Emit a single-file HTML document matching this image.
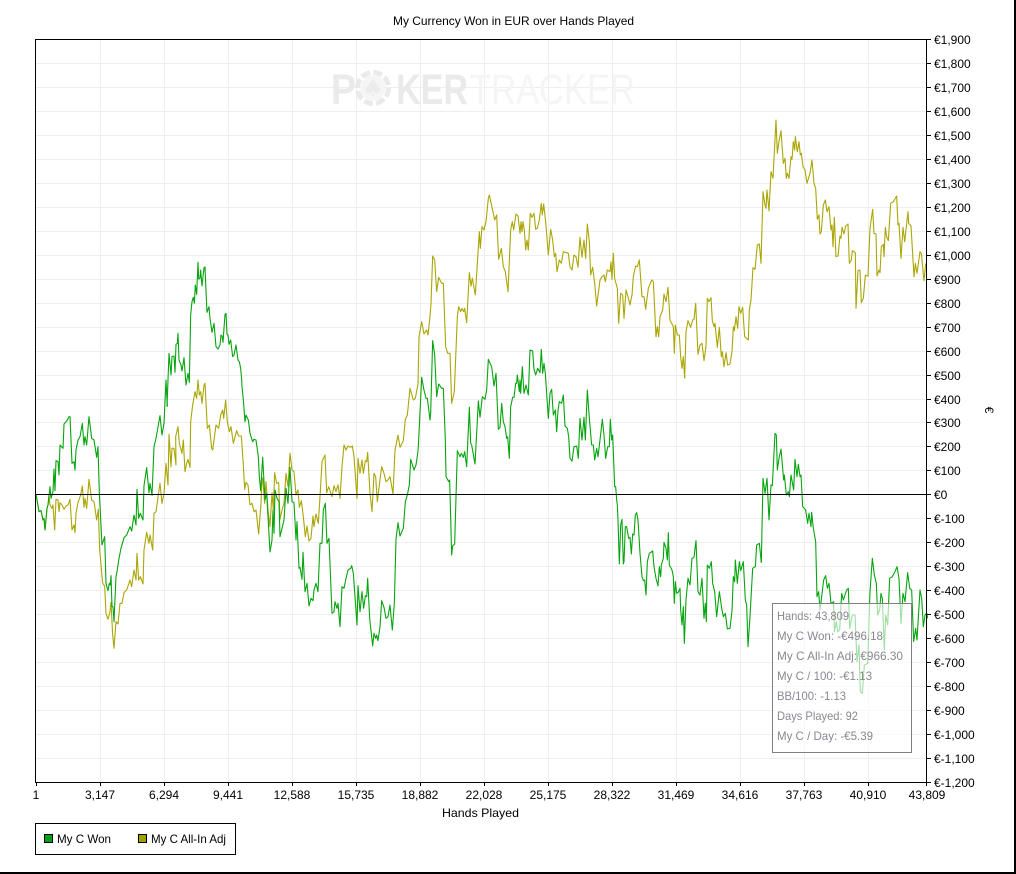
<!DOCTYPE html>
<html><head><meta charset="utf-8"><title>My Currency Won in EUR over Hands Played</title>
<style>
html,body{margin:0;padding:0;background:#fff;width:1016px;height:874px;overflow:hidden}
svg{display:block;position:absolute;left:0;top:0}
text{font-family:"Liberation Sans",Arial,sans-serif;font-size:12px;fill:#000}
.g polyline,.o polyline{fill:none;stroke-width:1.1;vector-effect:non-scaling-stroke;stroke-linejoin:round}
.g polyline{stroke:#06a50e}
.o polyline{stroke:#aba606}
.t text{fill:#8b8792}
</style></head><body>
<svg width="1016" height="874" viewBox="0 0 1016 874" xmlns="http://www.w3.org/2000/svg">
<rect width="1016" height="874" fill="#fff"/>
<rect x="1014" y="0" width="2" height="874" fill="#000"/>
<rect x="0" y="872" width="1016" height="2" fill="#000"/>
<text x="513.5" y="25" text-anchor="middle" textLength="241" lengthAdjust="spacingAndGlyphs">My Currency Won in EUR over Hands Played</text>

<path shape-rendering="crispEdges" fill="none" stroke="#eeeeee" d="M36 63.5H926M36 87.5H926M36 111.5H926M36 135.5H926M36 159.5H926M36 183.5H926M36 207.5H926M36 231.5H926M36 255.5H926M36 279.5H926M36 303.5H926M36 327.5H926M36 351.5H926M36 375.5H926M36 399.5H926M36 422.5H926M36 446.5H926M36 470.5H926M36 518.5H926M36 542.5H926M36 566.5H926M36 590.5H926M36 614.5H926M36 638.5H926M36 662.5H926M36 686.5H926M36 710.5H926M36 734.5H926M36 758.5H926M100.5 40V782M164.5 40V782M228.5 40V782M292.5 40V782M356.5 40V782M420.5 40V782M484.5 40V782M548.5 40V782M612.5 40V782M676.5 40V782M740.5 40V782M804.5 40V782M868.5 40V782"/>

<g>
<text x="331" y="104" textLength="25" lengthAdjust="spacingAndGlyphs" style="font-size:43px;font-weight:bold;fill:#e8e8e8;fill-opacity:.9">P</text>
<circle cx="373" cy="88" r="15.5" fill="none" stroke="#e8e8e8" stroke-width="5" stroke-dasharray="9 3.2" opacity=".9"/>
<circle cx="373" cy="88" r="12.5" fill="#f4f4f4" opacity=".9"/>
<text x="373" y="96" text-anchor="middle" style="font-size:24px;fill:#ececec;font-family:'DejaVu Sans',sans-serif">♠</text>
<text x="396" y="104" textLength="72" lengthAdjust="spacingAndGlyphs" style="font-size:43px;font-weight:bold;fill:#e8e8e8;fill-opacity:.9">KER</text>
<text x="470" y="104" textLength="165" lengthAdjust="spacingAndGlyphs" style="font-size:43px;fill:#f4f4f4;fill-opacity:.9">TRACKER</text>
</g>

<g class="o">
<polyline transform="translate(30,370) scale(.33333)" points="18,373 21,390 27,425 33,422 39,450 42,445 45,480 51,415 54,405 57,375 60,405 66,415 69,405 74,480 78,388 84,390 87,425 90,398 96,405 102,418 108,408 114,405 120,388 126,480 132,465 135,488 138,430 144,398 152,375 157,348 162,412 165,385 170,415 177,328 185,390 192,395 200,450 205,418 209,540 218,640 224,648 228,730 234,748 240,725 243,697 248,795 252,835 258,755 264,762 270,700 276,700 282,668 290,660 300,630 305,650 312,600 318,630 321,550 326,630 331,620 339,642 342,540 350,487 357,520 360,495 368,540 372,430 378,425 390,340 396,400 402,370 408,280 414,345 417,193 423,290 426,235 432,235 438,285 437,200 444,170 448,220 456,250 460,210 465,305 470,280 474,268 480,292 482,155 488,105 495,65 500,85 504,30 508,75 512,65 516,100 522,45 525,40 532,175 538,165 545,235 548,240 558,165 566,175 572,135 578,120 581,145 587,90 592,155 598,185 603,170 610,220 620,182 626,198 634,198 640,285 644,358 648,337 654,345 660,405 666,400 672,425 678,420 686,492 693,400 696,325"/>
<polyline transform="translate(260,370) scale(.33333)" points="8,322 14,400 18,335 24,420 30,470 36,368 40,420 44,308 50,340 56,338 60,448 66,420 72,400 78,310 84,350 90,250 96,300 102,305 108,375 114,360 118,412 124,392 130,440 136,500 141,468 147,513 153,505 159,438 162,470 168,432 175,460 180,380 186,275 195,255 200,368 206,350 216,380 222,347 228,365 234,345 240,385 246,290 252,225 258,240 264,228 272,232 277,228 282,260 291,385 294,265 300,310 306,270 310,310 316,272 320,275 323,247 330,370 336,425 342,310 347,320 352,395 358,345 365,290 372,310 378,335 384,330 390,320 399,372 405,240 414,195 420,232 430,212 436,148 442,135 450,55 460,90 466,85 474,42"/>
<polyline transform="translate(400,180) scale(.33333)" points="54,612 57,470 65,425 72,462 80,450 84,465 90,410 93,370 98,228 104,240 110,335 116,292 125,310 130,310 137,500 143,520 150,520 155,670 163,635 172,410 176,380 182,395 186,385 191,395 194,385 200,428 208,278 213,318 217,295 226,345 232,250 238,155 241,205 246,140 252,150 258,125 265,55 268,45 280,100 284,120 290,105 296,238 304,205 310,260 316,275 324,335 332,150 337,125 341,150 348,102 354,108 360,160 363,125 366,155 369,125 373,150 377,210 381,180 385,210 391,100 396,112 402,100 407,148 412,145 418,120 424,70 427,105 431,72 437,125 445,225 452,148 458,180 463,230 467,220 471,275 478,240 484,250 490,215 505,220 510,260 516,270 522,225 528,230 534,262 540,172 546,232 552,180 557,235 562,132 568,185 572,285 578,262 584,310 590,378 600,300 606,290 612,285 616,305 622,270 630,275 633,245 636,298 640,220 644,295 652,325 656,430 662,340 668,345 672,415 678,330 684,350 690,375 696,345 700,290 707,258 712,260 718,240 726,350 732,350 737,388 745,325 755,300 760,305 768,470 772,440 776,470 780,410 788,390 792,342 798,365 804,322 810,420 820,440 823,520 826,435 832,465 838,465 842,530 846,565 850,530 854,595"/>
<polyline transform="translate(680,110) scale(.33333)" points="14,805 18,665 24,632 32,652 38,630 42,628 47,580 54,733 60,705 66,700 72,752 78,708 82,565 87,575 93,563 97,632 102,650 105,640 112,712 118,652 124,740 127,725 132,770 138,728 143,765 150,762 156,725 160,650 163,662 168,620 173,655 177,590 182,610 188,592 194,680 200,685 205,690 208,600 213,570 219,473 225,478 232,405 238,402 243,460 249,245 255,285 258,295 261,240 267,303 273,185 279,205 288,30 292,130 296,100 303,62 310,160 315,145 319,205 322,190 327,205 333,140 336,148 340,95 344,120 346,80 352,125 357,95 361,135 364,130 369,170 375,180 381,220 390,190 396,150 402,220 407,235 412,328 417,315 420,372 424,365 430,285 436,270 441,305 447,290 453,360 456,345 459,410 463,322 468,440 474,438 480,378 483,385 486,352 492,372 497,348 504,342 508,460 514,450 517,422 526,428 528,595 534,482 540,480 544,578 550,565 556,496 564,498 570,355 578,298 582,370 588,372 591,498 597,480 600,488 604,410 610,403 612,440 616,352 620,380 625,392 632,280 640,275 650,258 654,345 657,340 663,445 669,352 674,395 684,305 686,340 693,348 702,500 706,460 711,490 720,425 724,430 732,512 737,462 740,460"/>
</g>

<g class="g">
<polyline transform="translate(30,370) scale(.33333)" points="18,373 21,390 27,425 33,422 39,450 42,445 45,480 51,415 54,405 60,350 63,385 69,365 72,297 75,362 78,272 84,275 87,315 90,225 99,235 102,162 111,152 117,140 120,140 126,280 132,275 135,300 138,240 144,210 150,200 157,160 162,225 165,200 170,225 177,140 185,205 192,210 200,262 204,230 208,370 216,525 224,500 228,640 234,662 238,640 241,645 243,617 246,710 249,710 252,755 258,620 261,605 267,565 273,535 282,503 290,495 300,470 305,483 312,435 318,465 321,358 326,445 331,430 339,450 342,347 350,293 357,368 360,340 366,376 372,230 378,205 390,137 396,195 402,160 408,30 412,110"/>
<polyline transform="translate(160,255) scale(.33333)" points="21,455 27,295 33,360 36,305 42,303 45,352 48,268 52,265 54,235 57,315 63,330 66,348 72,308 78,390 84,355 88,382 92,180 96,140 100,127 103,145 106,90 110,118 114,22 116,72 120,70 122,45 126,93 132,38 135,36 139,130 141,172 147,155 150,190 156,232 162,205 168,275 174,282 180,270 183,240 186,243 189,262 195,178 198,175 201,238 204,240 207,268 212,255 218,305 222,300 228,270 234,315 238,320 242,340 246,385"/>
<polyline transform="translate(30,370) scale(.33333)" points="635,40 640,90 645,155 648,135 655,150 660,190 668,215 672,208 678,210 685,260 688,320 692,362 698,262 705,390 710,370 720,545"/>
<polyline transform="translate(260,370) scale(.33333)" points="30,547 36,510 39,420 42,490 45,360 51,385 57,395 60,500 66,475 72,450 78,355 84,400 90,292 96,395 102,398 108,510 111,455 117,595 120,592 126,628 129,547 135,665 141,640 147,708 153,685 159,692 162,660 168,640 174,665 180,520 186,520 190,420 196,400 201,520 207,505 216,730 222,725 225,695 231,715 234,700 240,770 246,650 252,655 258,625 264,600 272,595 275,587 280,610 285,680 291,765 294,647 300,725 306,665 311,715 316,677 320,680 323,625 329,745 338,828 342,790 347,805 350,795 354,812 360,770 365,692 372,712 378,745 384,740 390,705 397,780 403,700 408,508 414,458 420,498 430,475 436,395 442,375 448,345 452,268 462,300 468,285 474,244"/>
<polyline transform="translate(400,180) scale(.33333)" points="54,814 56,780 65,592 72,630 78,655 82,655 90,720 92,700 98,482 104,525 110,650 116,612 125,625 130,625 136,780"/>
<polyline transform="translate(260,370) scale(.33333)" points="556,210 558,320 566,335 569,330 575,555 578,528 584,522 592,242 600,260 604,250 610,262 614,245 620,290 628,112 632,220"/>
<polyline transform="translate(470,340) scale(.33333)" points="2,310 5,315 15,372 20,280 25,183 30,232 37,170 45,178 50,150 55,58 60,70 65,80 72,138 78,100 85,268 90,262 95,190 100,245 105,260 110,295 113,290 118,355 122,200 128,172 132,172 137,130 140,130 142,105 148,155 150,120 152,160 157,80 162,160 168,135 175,165 180,30 188,33 192,88 197,105 203,85 210,98 214,28 218,100 222,70 226,100 235,235 240,160 245,148 250,225 256,210 260,275 264,212 268,185 275,190 280,165 285,258 292,265 296,290 300,355 306,363 312,320 320,318 325,355 330,235 336,300 342,232 346,300 352,150 358,235 365,315 370,315 374,360 380,325 384,350 390,300 397,238 402,285 407,355 413,320 418,320 421,238 425,300 428,285 434,440 437,440 440,480"/>
<polyline transform="translate(600,420) scale(.33333)" points="50,240 52,255 54,300 58,432 62,315 66,298 70,432 72,425 76,320 80,320 86,355 90,352 94,402 98,342 102,345 106,285 110,278 114,300 120,400 126,470 130,482 134,480 138,525 142,425 148,400 158,393 162,440 168,475 174,498 178,440 182,470 184,435 190,415 192,367 198,385 202,420 205,338 208,435 216,450 220,470 223,550 226,485 230,520 235,517 240,505 242,570 246,615 250,560 253,670 258,540 264,475 270,495 276,415 282,412 288,362 294,515 300,525 306,475 312,595 316,550 319,605 322,435 328,445 334,425 338,490 344,515 350,590 358,515 366,570 370,590 376,580 382,627 390,625 396,572 400,470 404,485 406,420 412,490 418,425 422,452 430,425 436,540 440,555 444,680 450,590 458,445 466,440 470,375 478,370 484,428"/>
<polyline transform="translate(755,425) scale(.33333)" points="19,413 24,160 30,205 36,160 42,285 48,180 52,182 60,25 64,30 67,135 72,100 78,72 86,165 88,150 94,210 100,200 103,215 108,150 116,195 120,103 126,155 130,118 135,155 138,150 143,245 152,255 158,295 162,265 168,305 170,262 175,310 182,350 186,515 191,500 195,555 200,515 206,465 212,452 217,490 222,475 228,535 236,530 238,620 244,590 248,620 254,615 260,505 265,525 275,495 280,490 284,610 292,570 300,570 306,710 312,660 316,800 322,805 328,720 338,715 345,500 352,400 358,450 364,475 368,570 374,555 378,505 382,520 388,675 392,570 398,600 404,460 412,455 420,440 426,425 432,460 438,595 444,505 450,530 458,443 464,490 470,495 476,650 482,610 486,645 495,495 500,520 505,605 510,570 515,565 518,580"/>
</g>

<path shape-rendering="crispEdges" fill="none" stroke="#000" d="M36 494.5H926"/>
<path shape-rendering="crispEdges" fill="none" stroke="#000" d="M35.5 39V783M35 39.5H927M35 782.5H927M926.5 39V783M36.5 783V786M100.5 783V786M164.5 783V786M228.5 783V786M292.5 783V786M356.5 783V786M420.5 783V786M484.5 783V786M548.5 783V786M612.5 783V786M676.5 783V786M740.5 783V786M804.5 783V786M868.5 783V786M926.5 783V786M927 39.5H931M927 63.5H931M927 87.5H931M927 111.5H931M927 135.5H931M927 159.5H931M927 183.5H931M927 207.5H931M927 231.5H931M927 255.5H931M927 279.5H931M927 303.5H931M927 327.5H931M927 351.5H931M927 375.5H931M927 399.5H931M927 422.5H931M927 446.5H931M927 470.5H931M927 494.5H931M927 518.5H931M927 542.5H931M927 566.5H931M927 590.5H931M927 614.5H931M927 638.5H931M927 662.5H931M927 686.5H931M927 710.5H931M927 734.5H931M927 758.5H931M927 782.5H931"/>

<g>
<text x="934" y="44">€1,900</text><text x="934" y="68">€1,800</text><text x="934" y="92">€1,700</text><text x="934" y="116">€1,600</text><text x="934" y="140">€1,500</text><text x="934" y="164">€1,400</text><text x="934" y="188">€1,300</text><text x="934" y="212">€1,200</text><text x="934" y="236">€1,100</text><text x="934" y="260">€1,000</text><text x="934" y="284">€900</text><text x="934" y="308">€800</text><text x="934" y="332">€700</text><text x="934" y="356">€600</text><text x="934" y="380">€500</text><text x="934" y="404">€400</text><text x="934" y="427">€300</text><text x="934" y="451">€200</text><text x="934" y="475">€100</text><text x="934" y="499">€0</text><text x="934" y="523">€-100</text><text x="934" y="547">€-200</text><text x="934" y="571">€-300</text><text x="934" y="595">€-400</text><text x="934" y="619">€-500</text><text x="934" y="643">€-600</text><text x="934" y="667">€-700</text><text x="934" y="691">€-800</text><text x="934" y="715">€-900</text><text x="934" y="739">€-1,000</text><text x="934" y="763">€-1,100</text><text x="934" y="787">€-1,200</text>
</g>
<text transform="translate(985,410) rotate(90)" text-anchor="middle">€</text>

<g text-anchor="middle">
<text x="36" y="799">1</text><text x="100" y="799">3,147</text><text x="164" y="799">6,294</text><text x="228" y="799">9,441</text><text x="292" y="799">12,588</text><text x="356" y="799">15,735</text><text x="420" y="799">18,882</text><text x="484" y="799">22,028</text><text x="548" y="799">25,175</text><text x="612" y="799">28,322</text><text x="676" y="799">31,469</text><text x="740" y="799">34,616</text><text x="804" y="799">37,763</text><text x="868" y="799">40,910</text><text x="927" y="799">43,809</text>
<text x="480.5" y="817" textLength="77" lengthAdjust="spacingAndGlyphs">Hands Played</text>
</g>

<rect x="35.5" y="823.5" width="200" height="31" fill="#fff" stroke="#000" shape-rendering="crispEdges"/>
<rect x="44.5" y="834.5" width="8" height="8" fill="#00a010" stroke="#000" shape-rendering="crispEdges"/>
<rect x="138.5" y="834.5" width="8" height="8" fill="#a0a000" stroke="#000" shape-rendering="crispEdges"/>
<text x="57" y="843" textLength="54" lengthAdjust="spacingAndGlyphs">My C Won</text>
<text x="151" y="843" textLength="75" lengthAdjust="spacingAndGlyphs">My C All-In Adj</text>

<rect x="772.5" y="603.5" width="139" height="149" fill="#fff" fill-opacity=".62" stroke="#808080" shape-rendering="crispEdges"/>
<g class="t">
<text x="777" y="620" textLength="72" lengthAdjust="spacingAndGlyphs">Hands: 43,809</text>
<text x="777" y="640" textLength="106" lengthAdjust="spacingAndGlyphs">My C Won: -€496.18</text>
<text x="777" y="660" textLength="126" lengthAdjust="spacingAndGlyphs">My C All-In Adj: €966.30</text>
<text x="777" y="680" textLength="95" lengthAdjust="spacingAndGlyphs">My C / 100: -€1.13</text>
<text x="777" y="700" textLength="69" lengthAdjust="spacingAndGlyphs">BB/100: -1.13</text>
<text x="777" y="720" textLength="81" lengthAdjust="spacingAndGlyphs">Days Played: 92</text>
<text x="777" y="740" textLength="96" lengthAdjust="spacingAndGlyphs">My C / Day: -€5.39</text>
</g>
</svg>
</body></html>
